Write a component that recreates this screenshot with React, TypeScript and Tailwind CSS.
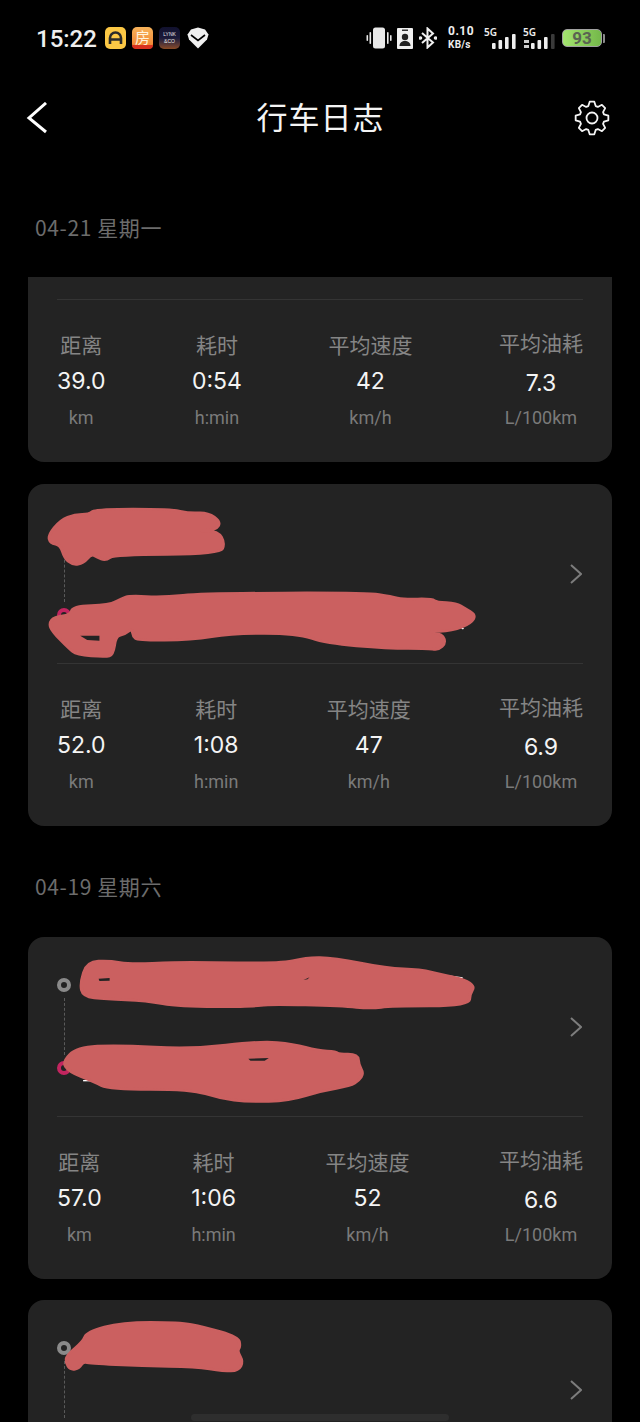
import type { ReactNode } from "react";

type Stat = { label: string; value: string; unit: string };

const sans = "font-['Noto_Sans_CJK_SC','Noto_Sans',sans-serif]";

function makeStats(distance: string, time: string, speed: string, fuel: string): Stat[] {
  return [
    { label: "距离", value: distance, unit: "km" },
    { label: "耗时", value: time, unit: "h:min" },
    { label: "平均速度", value: speed, unit: "km/h" },
    { label: "平均油耗", value: fuel, unit: "L/100km" },
  ];
}

function StatusBar() {
  return (
    <div className="flex h-[76px] items-center pl-[36px] pr-[35px]">
      <span className="mt-[1px] w-[69px] font-['Roboto',sans-serif] text-[24px] font-medium text-[#eeeeee]">
        15:22
      </span>
      <div className="flex items-center gap-[6px]">
        <div className="flex h-[22px] w-[21px] items-center justify-center rounded-[5px] bg-[#fcc845]">
          <svg width="15" height="14" viewBox="0 0 15 14" fill="none" stroke="#2a2a2a" strokeWidth="2.6">
            <path d="M2 13V7a5.5 5.5 0 0 1 11 0v6M2 8.5h11" />
          </svg>
        </div>
        <div className="relative flex h-[22px] w-[21px] justify-center rounded-[5px] bg-gradient-to-b from-[#f7b35a] to-[#ef7d2c]">
          <span className={`${sans} text-[15px] leading-[20px] text-[#fff3dd]`}>房</span>
          <div className="absolute bottom-0 left-0 h-[4px] w-full rounded-b-[5px] bg-[#d8321f]" />
        </div>
        <div className="flex h-[22px] w-[21px] flex-col items-center justify-center rounded-[5px] bg-gradient-to-b from-[#11112e] via-[#1c1a3a] to-[#8a4a22] font-['Liberation_Sans',sans-serif] text-[5px] leading-[7px] text-[#e8e8e8]">
          <span>LYNK</span>
          <span>&amp;CO</span>
        </div>
        <svg width="22" height="22" viewBox="0 0 22 22" className="ml-[1px]">
          <path d="M11 0.5 18 2.5 21.5 7.5 20 12.5 11 21.5 2 12.5 0.5 7.5 4 2.5Z" fill="#f0f0f0" />
          <path d="M4 8 11 13.5 18 8" fill="none" stroke="#000" strokeWidth="1.6" />
        </svg>
      </div>
      <div className="ml-auto flex items-center">
        <svg width="26" height="22" viewBox="0 0 26 22" fill="#e8e8e8" className="ml-[1px]">
          <rect x="7" y="0.5" width="12" height="21" rx="2.5" />
          <rect x="3.5" y="5" width="1.6" height="12" rx="0.8" />
          <rect x="0.5" y="8" width="1.6" height="6" rx="0.8" />
          <rect x="21" y="5" width="1.6" height="12" rx="0.8" />
          <rect x="24" y="8" width="1.6" height="6" rx="0.8" />
        </svg>
        <svg width="16" height="21" viewBox="0 0 16 21" className="ml-[5px]">
          <rect width="16" height="21" rx="1" fill="#f0f0f0" />
          <rect x="5" y="1.5" width="6" height="1.5" fill="#333" />
          <circle cx="8" cy="9" r="3.2" fill="#222" />
          <path d="M2.5 18c0-3.5 2.5-5 5.5-5s5.5 1.5 5.5 5Z" fill="#222" />
        </svg>
        <svg width="18" height="22" viewBox="0 0 18 22" fill="none" stroke="#f0f0f0" strokeWidth="2" className="ml-[6px]">
          <path d="M3 6 14 15.5 8.5 20.5V1.5L14 6.5 3 16" />
          <circle cx="1.5" cy="11" r="0.8" fill="#f0f0f0" />
          <circle cx="16.5" cy="11" r="0.8" fill="#f0f0f0" />
        </svg>
        <div className="ml-[11px] flex w-[28px] flex-col font-['Roboto',sans-serif] font-bold text-[#eeeeee]">
          <span className="text-[12px] leading-[13px] tracking-[0.5px]">0.10</span>
          <span className="text-[10px] leading-[13px] tracking-[0.3px]">KB/s</span>
        </div>
        <div className="relative ml-[8px] h-[22px] w-[32px]">
          <span className="absolute left-0 top-[-1px] font-['Noto_Sans',sans-serif] text-[10px] font-semibold leading-[12px] text-[#eeeeee]">
            5G
          </span>
          <SignalBars className="absolute bottom-0 right-0" dim={false} />
        </div>
        <div className="relative ml-[7px] h-[22px] w-[32px]">
          <span className="absolute left-0 top-[-1px] font-['Noto_Sans',sans-serif] text-[10px] font-semibold leading-[12px] text-[#eeeeee]">
            5G
          </span>
          <span className="absolute bottom-[1px] left-[1px] h-[8px] w-[5px] border-y-[3px] border-y-[#cccccc]" />
          <SignalBars className="absolute bottom-0 right-0" dim />
        </div>
        <div className="ml-[7px] flex items-center">
          <div className="flex h-[18px] w-[40px] items-center justify-center rounded-[5px] border border-[#a0a0a0] bg-gradient-to-r from-[#a4e56f] to-[#74b84a] font-['Roboto',sans-serif] text-[17px] font-bold leading-none text-[#5a6352]">
            93
          </div>
          <div className="ml-[1px] h-[9px] w-[2px] rounded-r-[1px] bg-[#8a8a8a]" />
        </div>
      </div>
    </div>
  );
}

function SignalBars({ className, dim }: { className: string; dim: boolean }) {
  return (
    <svg width="24" height="15" viewBox="0 0 24 15" className={className}>
      <rect x="0" y="9" width="3.6" height="6" rx="1" fill="#eeeeee" />
      <rect x="6.5" y="6" width="3.6" height="9" rx="1" fill="#eeeeee" />
      <rect x="13" y="3" width="3.6" height="12" rx="1" fill="#eeeeee" />
      <rect x="20" y="0" width="3.6" height="15" rx="1" fill={dim ? "#3a3a3a" : "#eeeeee"} />
    </svg>
  );
}

// 8 tooth outline, same shape as the settings gear in the picture
function gearPath() {
  const pts: string[] = [];
  for (let i = 0; i < 8; i++) {
    const a = (i * Math.PI) / 4 - Math.PI / 2;
    const at = (r: number, off: number) =>
      `${(19 + r * Math.cos(a + off)).toFixed(2)} ${(19 + r * Math.sin(a + off)).toFixed(2)}`;
    pts.push(at(12.5, -0.3), at(16.5, -0.14), at(16.5, 0.14), at(12.5, 0.3));
  }
  return `M${pts.join("L")}Z`;
}

function NavBar() {
  return (
    <div className="flex h-[84px] items-center justify-between pl-[26px] pr-[29px]">
      <div className="w-[42px]">
        <svg width="22" height="32" viewBox="0 0 22 32" fill="none" stroke="#ffffff" strokeWidth="3">
          <path d="M20 1 3 16l17 14" />
        </svg>
      </div>
      <span className={`${sans} -mt-[3px] text-[31px] tracking-[1px] text-[#f4f4f4]`}>行车日志</span>
      <svg width="38" height="38" viewBox="0 0 38 38" fill="none" stroke="#f4f4f4" strokeWidth="1.8" strokeLinejoin="round">
        <path d={gearPath()} />
        <circle cx="19" cy="19" r="5.5" />
      </svg>
    </div>
  );
}

function DateLabel({ text, className }: { text: string; className: string }) {
  return (
    <div className={`${sans} px-[35px] text-[21px] leading-[28px] tracking-[0.6px] text-[#6c6c6c] ${className}`}>
      {text}
    </div>
  );
}

function StatsRow({ stats }: { stats: Stat[] }) {
  return (
    <div className="flex h-[162px] justify-between px-[29px] pt-[30px]">
      {stats.map((s, i) => (
        <div key={s.label} className={`flex flex-col items-center ${i === 3 ? "-mt-[2px]" : ""}`}>
          <span className={`${sans} text-[21px] leading-[28px] text-[#858585]`}>{s.label}</span>
          <span
            className={`font-['Inter',sans-serif] text-[23px] leading-[28px] text-[#f4f4f4] ${i === 3 ? "mt-[13px]" : "mt-[9px]"}`}
          >
            {s.value}
          </span>
          <span
            className={`font-['Roboto',sans-serif] text-[18px] leading-[24px] text-[#7a7a7a] ${i === 3 ? "mt-[9px]" : "mt-[11px]"}`}
          >
            {s.unit}
          </span>
        </div>
      ))}
    </div>
  );
}

// rounds the traced points through their midpoints, so the marker strokes look soft
function smooth(points: string) {
  const p = points.split(" ").map((s) => s.split(",").map(Number));
  const mid = (a: number[], b: number[]) => `${(a[0] + b[0]) / 2} ${(a[1] + b[1]) / 2}`;
  let d = `M${mid(p[p.length - 1], p[0])}`;
  p.forEach((pt, i) => {
    d += `Q${pt[0]} ${pt[1]} ${mid(pt, p[(i + 1) % p.length])}`;
  });
  return `${d}Z`;
}

// hand-drawn redaction scribbles, traced off the picture
function Scribble({ view, shapes, marks, holes }: { view: string; shapes: string[]; marks?: string[]; holes?: string[] }) {
  return (
    <svg
      viewBox={view}
      preserveAspectRatio="none"
      className="pointer-events-none absolute left-0 top-0 h-[200px] w-[584px]"
    >
      {marks?.map((m) => <path key={m} d={m} fill="none" stroke="#ffffff" strokeWidth="4" />)}
      {shapes.map((p) => (
        <path key={p} d={smooth(p)} fill="#cb6060" stroke="#cb6060" strokeWidth="8" strokeLinejoin="round" />
      ))}
      {holes?.map((h) => <polygon key={h} points={h} fill="#232323" />)}
    </svg>
  );
}

function TripCard({ stats, scribble }: { stats?: Stat[]; scribble?: ReactNode }) {
  return (
    <div className="relative mx-[28px] overflow-hidden rounded-[16px] bg-[#232323]">
      <div className="flex h-[179px] items-center justify-between px-[29px]">
        <div className="flex flex-col items-center self-start pt-[41px]">
          <div className="size-[14px] rounded-full border-[4px] border-[#8a8a8a]" />
          <div className="my-[6px] h-[57px] border-l border-dashed border-[#5a5a5a]" />
          <div className="size-[14px] rounded-full border-[4px] border-[#c2255f]" />
        </div>
        <svg width="12" height="20" viewBox="0 0 12 20" fill="none" stroke="#7c7c7c" strokeWidth="2" className="mr-[1px]">
          <path d="M1 1l10 9-10 9" />
        </svg>
      </div>
      <div className="mx-[29px] h-px bg-[#343434]" />
      {stats && <StatsRow stats={stats} />}
      {scribble}
    </div>
  );
}

export default function App() {
  return (
    <div className="flex h-[1422px] w-[640px] flex-col overflow-hidden bg-black">
      <StatusBar />
      <NavBar />
      <DateLabel text="04-21 星期一" className="mt-[53px] mb-[36px]" />
      <div className="relative flex-1 overflow-hidden">
        <div className="-mt-[157px]">
          <TripCard stats={makeStats("39.0", "0:54", "42", "7.3")} />
          <div className="h-[22px]" />
          <TripCard
            stats={makeStats("52.0", "1:08", "47", "6.9")}
            scribble={
              <Scribble
                view="70 12 1431 600"
                marks={["M478 153h10", "M1120 432l17 15"]}
                holes={["198,467 245,467 245,482 215,480"]}
                shapes={[
                  "120,165 150,120 185,103 220,103 235,87 420,87 465,100 510,97 542,125 530,150 480,152 535,153 552,190 540,222 280,224 260,242 240,232 225,222 205,250 180,255 160,235 150,195 125,190",
                  "122,430 135,410 175,405 180,378 270,375 300,355 320,347 400,352 500,340 900,338 960,350 990,358 1060,356 1070,366 1120,370 1140,385 1167,405 1155,430 1110,453 1045,455 1085,462 1093,490 1075,510 1055,506 950,505 800,490 730,460 570,460 470,480 340,481 328,470 325,445 305,465 285,468 278,525 260,531 190,525 170,505 130,455",
                ]}
              />
            }
          />
          <DateLabel text="04-19 星期六" className="mt-[46px] mb-[37px]" />
          <TripCard
            stats={makeStats("57.0", "1:06", "52", "6.6")}
            scribble={
              <Scribble
                view="70 21 1431 600"
                marks={["M1090 136l45 8", "M205 452h22"]}
                holes={["243,146 270,144 270,152 245,153", "610,386 660,384 650,392 615,392", "745,150 760,142 755,148"]}
                shapes={[
                  "198,160 215,95 270,92 320,103 430,97 510,97 700,100 750,82 820,83 950,115 1030,118 1090,135 1140,148 1164,170 1153,190 1150,228 960,228 910,236 840,228 660,222 620,230 440,230 360,212 260,207 205,200",
                  "155,395 190,352 290,345 470,358 640,333 720,342 780,362 825,365 830,372 878,373 880,405 892,430 880,452 860,468 790,482 710,512 610,516 540,505 470,478 270,478 230,455 170,425",
                ]}
              />
            }
          />
          <div className="h-[21px]" />
          <TripCard
            scribble={
              <Scribble
                view="70 30 1431 600"
                shapes={[
                  "165,195 205,155 215,125 300,97 440,97 500,110 585,140 590,170 582,183 597,215 585,243 550,243 480,230 350,228 220,220 205,215 195,235 175,240 163,220",
                ]}
              />
            }
          />
        </div>
        <div className="absolute bottom-[1px] left-[191px] h-[7px] w-[258px] rounded-full bg-[#2e2e2e]" />
      </div>
    </div>
  );
}
